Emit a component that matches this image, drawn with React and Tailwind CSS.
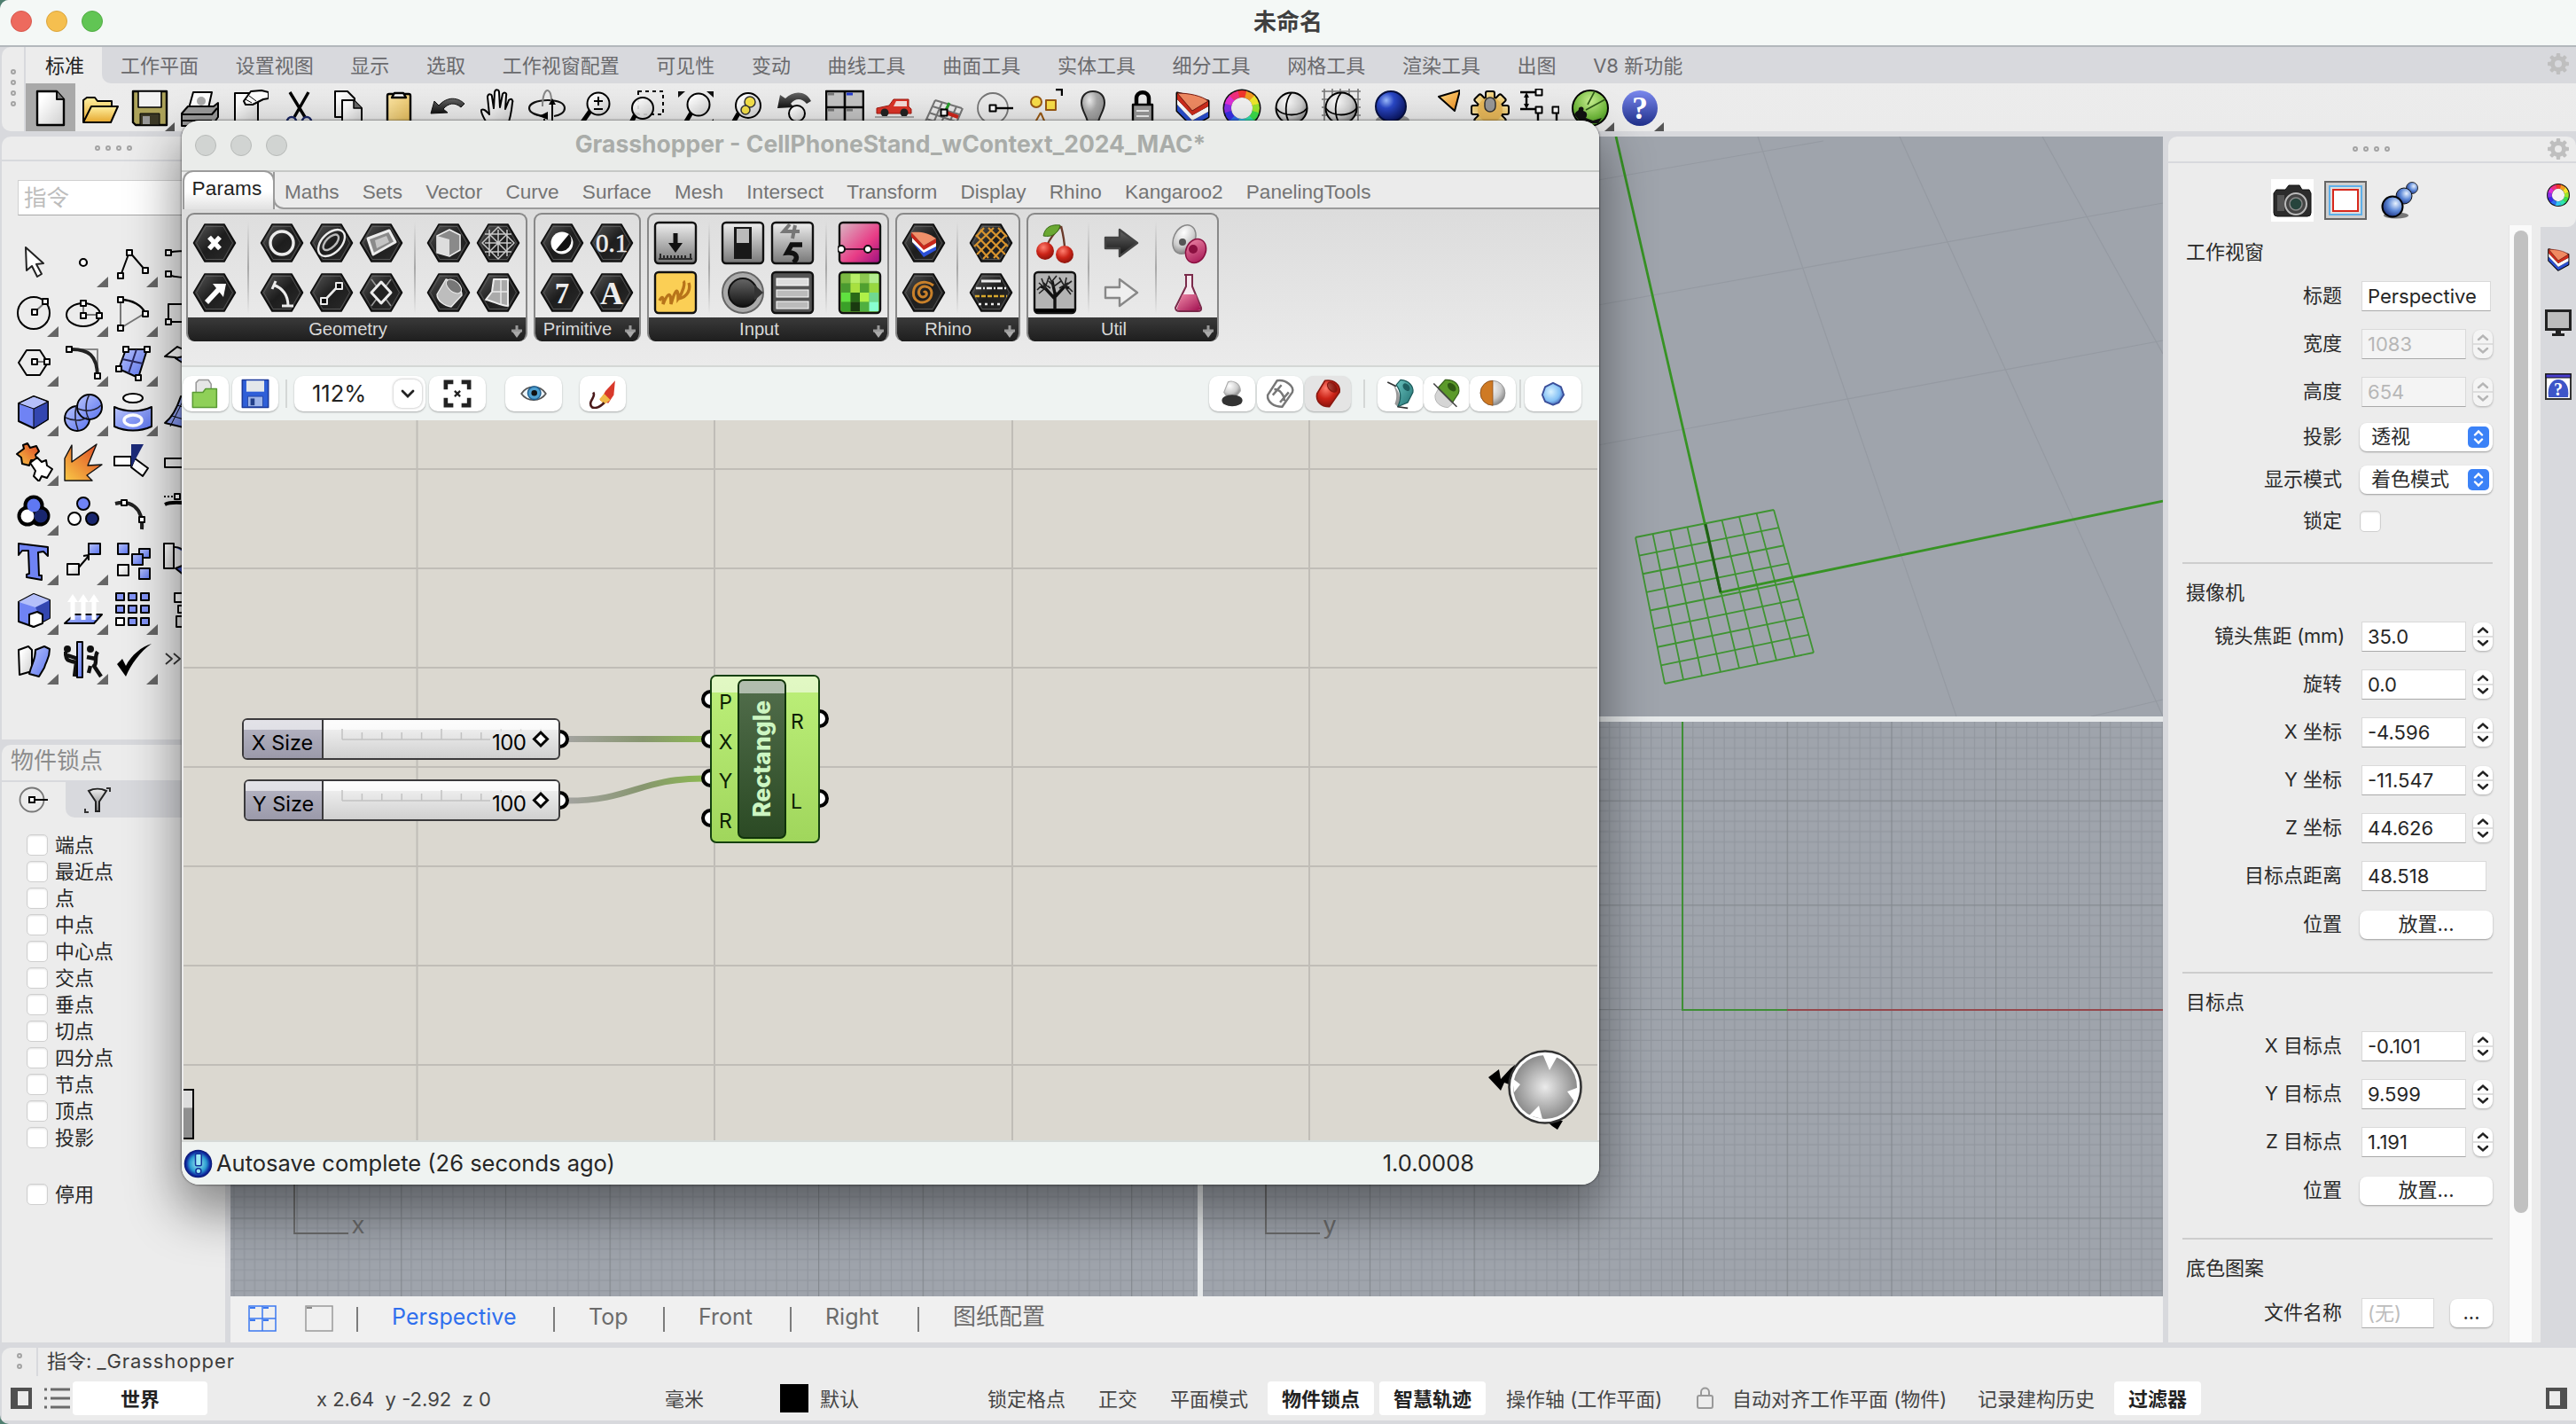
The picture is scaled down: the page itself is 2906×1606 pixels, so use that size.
import React from "react";

const UI = "font-['Inter','Noto_Sans_CJK_SC',sans-serif]";

/* ---------- shared gradients ---------- */
const Defs = () => (
  <svg width="0" height="0" className="absolute">
    <defs>
      <linearGradient id="paper" x1="0" y1="0" x2="1" y2="1"><stop offset=".2" stopColor="#fff" /><stop offset="1" stopColor="#cfcfcf" /></linearGradient>
      <linearGradient id="gold" x1="0" y1="0" x2="0" y2="1"><stop offset="0" stopColor="#fff0a0" /><stop offset="1" stopColor="#e5a62c" /></linearGradient>
      <linearGradient id="tan" x1="0" y1="0" x2="1" y2="1"><stop offset="0" stopColor="#ffe9a8" /><stop offset="1" stopColor="#e3b955" /></linearGradient>
      <linearGradient id="orange" x1="0" y1="1" x2="1" y2="0"><stop offset="0" stopColor="#f9c846" /><stop offset="1" stopColor="#dd4424" /></linearGradient>
      <linearGradient id="cone" x1="0" y1="0" x2="1" y2="1"><stop offset="0" stopColor="#ffe08a" /><stop offset="1" stopColor="#ee8a1c" /></linearGradient>
      <linearGradient id="blue" x1="0" y1="0" x2="1" y2="1"><stop offset="0" stopColor="#b9c4fb" /><stop offset="1" stopColor="#5a74f0" /></linearGradient>
      <linearGradient id="dark" x1="0" y1="0" x2="0" y2="1"><stop offset="0" stopColor="#666" /><stop offset="1" stopColor="#111" /></linearGradient>
      <linearGradient id="steel" x1="0" y1="0" x2="0" y2="1"><stop offset="0" stopColor="#efefef" /><stop offset="1" stopColor="#777" /></linearGradient>
      <linearGradient id="help" x1="0" y1="0" x2="0" y2="1"><stop offset="0" stopColor="#7a88ee" /><stop offset="1" stopColor="#1f2f8a" /></linearGradient>
      <linearGradient id="hex" x1="0" y1="0" x2="1" y2="1"><stop offset="0" stopColor="#5a5a5a" /><stop offset=".5" stopColor="#1d1d1d" /><stop offset="1" stopColor="#2c2c2c" /></linearGradient>
      <linearGradient id="pink" x1="0" y1="0" x2="1" y2="1"><stop offset="0" stopColor="#d9b8c4" /><stop offset=".6" stopColor="#e83c86" /><stop offset="1" stopColor="#9a0f80" /></linearGradient>
      <linearGradient id="flask" x1="0" y1="0" x2="1" y2="1"><stop offset="0" stopColor="#f08aa8" /><stop offset="1" stopColor="#a01050" /></linearGradient>
      <radialGradient id="ball" cx=".35" cy=".3" r=".8"><stop offset="0" stopColor="#fff" /><stop offset=".6" stopColor="#cdcdcd" /><stop offset="1" stopColor="#777" /></radialGradient>
      <radialGradient id="bulb" cx=".35" cy=".25" r=".8"><stop offset="0" stopColor="#eee" /><stop offset=".4" stopColor="#aaa" /><stop offset="1" stopColor="#8a8a8a" /></radialGradient>
      <radialGradient id="navy" cx=".35" cy=".3" r=".75"><stop offset="0" stopColor="#9dbdff" /><stop offset=".35" stopColor="#2a48c8" /><stop offset="1" stopColor="#08125a" /></radialGradient>
      <radialGradient id="pearl" cx=".65" cy=".35" r=".8"><stop offset="0" stopColor="#e8f2ff" /><stop offset=".45" stopColor="#5f8ad8" /><stop offset="1" stopColor="#0a1a68" /></radialGradient>
      <radialGradient id="sky" cx=".4" cy=".4" r=".7"><stop offset="0" stopColor="#d8f2ff" /><stop offset=".6" stopColor="#83c0f5" /><stop offset="1" stopColor="#2b3f9a" /></radialGradient>
      <radialGradient id="redB" cx=".4" cy=".3" r=".8"><stop offset="0" stopColor="#ff8070" /><stop offset=".5" stopColor="#cc2418" /><stop offset="1" stopColor="#7a0e08" /></radialGradient>
      <radialGradient id="green" cx=".5" cy=".3" r=".8"><stop offset="0" stopColor="#c8f090" /><stop offset=".6" stopColor="#6fb83a" /><stop offset="1" stopColor="#2a6a1a" /></radialGradient>
      <linearGradient id="teal" x1="0" y1="0" x2="1" y2="1"><stop offset="0" stopColor="#6cc4c0" /><stop offset="1" stopColor="#1f6f70" /></linearGradient>
      <radialGradient id="info" cx=".5" cy=".5" r=".5"><stop offset="0" stopColor="#a4f2f6" /><stop offset=".6" stopColor="#2a9ad0" /><stop offset=".85" stopColor="#0f2aa0" /><stop offset="1" stopColor="#0a1670" /></radialGradient>
      <radialGradient id="dial" cx=".5" cy=".5" r=".5"><stop offset="0" stopColor="#ebebeb" /><stop offset="1" stopColor="#8c8c8c" /></radialGradient>
    </defs>
  </svg>
);

const Svg = ({ s = 44, children }) => (
  <svg width={s} height={s} viewBox="0 0 44 44" fill="none" strokeLinejoin="round" className="block shrink-0">{children}</svg>
);
const B = ({ x, y, s = 6, f = "#fff" }) => <rect x={x - s / 2} y={y - s / 2} width={s} height={s} fill={f} stroke="#000" strokeWidth="2" />;

const Wheel = ({ s = 44, r = 16, w = 8 }) => {
  const cols = ["#f0362c", "#f39a20", "#f0e92c", "#9be82e", "#3ce04c", "#30e3b0", "#34c6f0", "#2f6ef2", "#3a2fe8", "#8a2fe8", "#e02fd8", "#f02f7c"];
  return (
    <Svg s={s}>
      <circle cx="22" cy="22" r={r + w / 2 + 1.5} fill="#111" />
      {cols.map((c, i) => {
        const a = ((i * 30 - 105) * Math.PI) / 180, b = ((i * 30 - 73) * Math.PI) / 180;
        return <path key={i} d={`M${22 + r * Math.cos(a)} ${22 + r * Math.sin(a)}A${r} ${r} 0 0 1 ${22 + r * Math.cos(b)} ${22 + r * Math.sin(b)}`} stroke={c} strokeWidth={w} />;
      })}
      <circle cx="22" cy="22" r={r - w / 2} fill="#f3f3f3" />
    </Svg>
  );
};
const Layers = ({ s = 44 }) => (
  <Svg s={s}>
    <path d="M5 5L5 25L22 42L40 32V14Z" fill="#000" stroke="#000" strokeWidth="3" />
    <path d="M5 18V25L22 42L40 32V26L22 36Z" fill="#2b4fd0" />
    <path d="M5 12V18L22 36L40 26V20L22 30Z" fill="#fff" />
    <path d="M5 5V12L22 30L40 20V14L22 25Z" fill="#cf2c1c" />
    <path d="M5 5C18 5 33 8 40 14L22 25Z" fill="#f08a62" stroke="#7a1a10" strokeWidth="1" />
  </Svg>
);
const Gear = () => (
  <svg width="26" height="26" viewBox="0 0 26 26" className="block">
    {[0, 45, 90, 135, 180, 225, 270, 315].map((a) => <rect key={a} x="10.8" y="1" width="4.4" height="6" rx="1" fill="#bfbfbf" transform={`rotate(${a} 13 13)`} />)}
    <circle cx="13" cy="13" r="6.5" fill="none" stroke="#bfbfbf" strokeWidth="5" />
  </svg>
);
const lens = (
  <>
    <path d="M15 25L3 42" stroke="#000" strokeWidth="5" />
    <circle cx="24" cy="17" r="12.5" fill="url(#paper)" stroke="#000" strokeWidth="2" />
  </>
);
const ballIcon = (f) => (
  <>
    <circle cx="22" cy="22" r="17.5" fill={f} stroke="#000" strokeWidth="2" />
    <path d="M22 4.5C14 14 14 30 20 39.5M4.5 22C12 32 32 32 39.5 22" stroke="#000" strokeWidth="1.8" />
  </>
);

/* ---------- main toolbar ---------- */
const TOP = [
  <Svg><path d="M7 3H29L37 12V41H7Z" fill="url(#paper)" stroke="#000" strokeWidth="2.4" /><path d="M29 3V12H37" fill="#777" stroke="#000" strokeWidth="2" /></Svg>,
  <Svg><path d="M3 38V13L7 10H16L19 14H35V20" fill="url(#gold)" stroke="#000" strokeWidth="2" /><path d="M3 38L12 20H42L34 38Z" fill="url(#gold)" stroke="#000" strokeWidth="2" /></Svg>,
  <Svg><path d="M3 3H41V41H6L3 38Z" fill="#ada35a" stroke="#000" strokeWidth="2.4" /><rect x="9" y="3" width="26" height="18" fill="#f2f2f2" stroke="#000" strokeWidth="1.6" /><rect x="11" y="28" width="22" height="13" fill="#3b3826" stroke="#000" /><rect x="14" y="31" width="8" height="9" fill="#999" /></Svg>,
  <Svg><path d="M10 22L15 4H36L32 22Z" fill="#fff" stroke="#000" strokeWidth="2" /><circle cx="24" cy="14" r="5" fill="#aaa" /><path d="M2 28L9 20H38L43 16V32L36 42H2Z" fill="#9a9a9a" stroke="#000" strokeWidth="2" /><path d="M2 29H36L42 22M2 36H36" stroke="#000" strokeWidth="2" /></Svg>,
  <Svg><path d="M6 5H32V41H6Z" fill="url(#paper)" stroke="#000" strokeWidth="2" /><path d="M16 14L24 3L36 2L44 4V11L38 12L26 18L18 18Z" fill="#fff" stroke="#000" strokeWidth="2" /><path d="M18 12L25 16M22 8L30 14" stroke="#000" /></Svg>,
  <Svg><path d="M12 4L29 32M33 4L17 32" stroke="#000" strokeWidth="3.4" /><circle cx="14" cy="37" r="5" stroke="#1b2766" strokeWidth="2.4" /><circle cx="31" cy="37" r="5" stroke="#1b2766" strokeWidth="2.4" /></Svg>,
  <Svg><path d="M7 3H21L29 11V32H7Z" fill="url(#paper)" stroke="#000" strokeWidth="2" /><path d="M15 13H28L37 22V43H15Z" fill="url(#paper)" stroke="#000" strokeWidth="2" /><path d="M28 13V22H37" fill="#666" stroke="#000" strokeWidth="1.5" /></Svg>,
  <Svg><rect x="10" y="6" width="26" height="36" rx="2" fill="url(#tan)" stroke="#000" strokeWidth="2.4" /><path d="M15 10L18 5H28L31 10Z" fill="#fff" stroke="#000" strokeWidth="2.4" /></Svg>,
  <Svg><path d="M3 28L7 14L12 19C22 8 34 10 41 17L37 21C30 15 23 16 17 23L22 27Z" fill="url(#dark)" stroke="#111" /></Svg>,
  <Svg><path d="M12 43C8 34 3 28 4 24C7 22 10 26 13 29L11 9C12 5 16 6 16 9L18 22L19 4C20 0 24 1 24 4L25 21L28 6C30 3 33 5 32 8L31 23L35 13C38 10 40 13 39 16C38 26 36 36 33 43" fill="url(#paper)" stroke="#000" strokeWidth="2" /></Svg>,
  <Svg><path d="M23 31C10 31 2 27 2 22S10 13 23 13S42 17 42 22C42 27 36 30 30 31" stroke="#111" strokeWidth="2.2" /><path d="M17 20C17 8 20 1 23 2C26 3 27 8 27 14" stroke="#888" strokeWidth="2" /><path d="M28 40V14M19 43V34" stroke="#000" strokeWidth="2" /><path d="M24 18L28 11L32 18ZM23 26L13 31L23 35Z" fill="#000" /></Svg>,
  <Svg>{lens}<path d="M19 14H29M24 9V19M19 23H29" stroke="#000" strokeWidth="2" /></Svg>,
  <Svg><path d="M11 27L3 42" stroke="#000" strokeWidth="5" /><rect x="13" y="3" width="28" height="26" stroke="#000" strokeWidth="2" strokeDasharray="4 4" /><circle cx="18" cy="22" r="12" fill="url(#paper)" fillOpacity=".9" stroke="#000" strokeWidth="2" /></Svg>,
  <Svg><path d="M2 10V3H10ZM34 3H42V10ZM42 34V42H34Z" fill="#111" /><path d="M17 27L8 42" stroke="#000" strokeWidth="5" /><circle cx="25" cy="18" r="12.5" fill="url(#paper)" stroke="#000" strokeWidth="2" /></Svg>,
  <Svg><path d="M14 28L6 42" stroke="#000" strokeWidth="5" /><circle cx="25" cy="19" r="14" fill="url(#paper)" stroke="#000" strokeWidth="2" /><circle cx="27" cy="15" r="6" fill="#f6e24a" stroke="#333" strokeWidth="1.5" /><circle cx="22" cy="24" r="5" fill="#f6e24a" stroke="#333" strokeWidth="1.5" /></Svg>,
  <Svg><path d="M2 22L5 7L11 11C20 2 34 2 40 14L35 17C29 10 22 11 17 17L21 21Z" fill="url(#dark)" /><circle cx="24" cy="28" r="9" fill="url(#paper)" stroke="#000" strokeWidth="2" /></Svg>,
  <Svg><rect x="1" y="3" width="42" height="40" fill="#c4c4c4" stroke="#000" strokeWidth="2.6" /><path d="M22 3V43M1 21H43" stroke="#000" strokeWidth="2.6" /><path d="M3 6H10M3 24H10M24 24H31" stroke="#777" strokeWidth="3" /><path d="M24 6H31" stroke="#223ad0" strokeWidth="3" /></Svg>,
  <Svg><path d="M2 22L16 19L21 12H38V20L41 23V28H2Z" fill="#dd3428" stroke="#a01a10" /><path d="M24 14H36V20H21Z" fill="#f7dcd8" /><circle cx="11" cy="27" r="4.5" fill="#222" /><circle cx="33" cy="27" r="4.5" fill="#222" /><path d="M0 32H44" stroke="#aaa" strokeWidth="2" /></Svg>,
  <Svg><path d="M12 13L42 22M9 20L39 29M5 27L35 37M2 34L30 43M12 13L1 37M20 15L9 41M28 17L17 43M36 20L26 43M43 22L34 43" stroke="#777" strokeWidth="2" /><path d="M28 16L22 28" stroke="#26a02a" strokeWidth="3" /><path d="M24 27L38 32" stroke="#d0261c" strokeWidth="4" /><B x={22} y={27} s={7} /></Svg>,
  <Svg><circle cx="21" cy="22" r="17" stroke="#777" strokeWidth="1.8" /><path d="M22 22H44" stroke="#000" strokeWidth="2.4" /><B x={21} y={22} s={7} /></Svg>,
  <Svg><circle cx="14" cy="15" r="6" fill="#fbe04a" stroke="#9a5a14" strokeWidth="2" /><rect x="25" y="13" width="11" height="11" fill="#fbe04a" stroke="#9a5a14" strokeWidth="2" /><path d="M19 27L10 43M19 27L26 43" stroke="#9a5a14" strokeWidth="2" /><path d="M36 1H43V8" stroke="#000" strokeWidth="2.4" /></Svg>,
  <Svg><path d="M17 44C17 32 9 26 9 16C9 8 14 3 22 3S35 8 35 16C35 26 27 32 27 44Z" fill="url(#bulb)" stroke="#222" strokeWidth="2" /></Svg>,
  <Svg><path d="M15 20V11C15 2 29 2 29 11V20" stroke="#000" strokeWidth="4.5" /><rect x="11" y="18" width="22" height="26" fill="#9a9a9a" stroke="#000" strokeWidth="2.4" /><path d="M15 25H29M15 31H29M15 37H29" stroke="#eee" strokeWidth="2" /></Svg>,
  <Layers />,
  <Wheel />,
  <Svg>{ballIcon("url(#ball)")}</Svg>,
  <Svg><path d="M0 3H44M0 12H44M0 21H44M0 30H44M0 38H44M3 0V44M12 0V44M21 0V44M31 0V44M41 0V44" stroke="#777" strokeWidth="1.6" />{ballIcon("url(#ball)")}</Svg>,
  <Svg><ellipse cx="24" cy="36" rx="19" ry="7" fill="#999" /><circle cx="22" cy="20" r="17" fill="url(#navy)" stroke="#061040" strokeWidth="2" /></Svg>,
  <Svg><path d="M20 9L44 2L38 25Z" fill="url(#cone)" stroke="#000" strokeWidth="2" /></Svg>,
  <Svg>{[0, 45, 90, 135, 180, 225, 270, 315].map((a) => <rect key={a} x="17" y="3" width="10" height="11" rx="2" fill="url(#tan)" stroke="#000" strokeWidth="2" transform={`rotate(${a} 22 24)`} />)}<circle cx="22" cy="24" r="14" fill="#e9b95a" /><rect x="16" y="10" width="12" height="16" rx="6" fill="#999" stroke="#333" strokeWidth="1.5" /></Svg>,
  <Svg><path d="M0 4H24M0 23H18M7 8V19" stroke="#000" strokeWidth="2.4" /><path d="M4 10L7 4L10 10ZM4 17L7 23L10 17Z" fill="#000" /><B x={21} y={4} s={7} /><B x={21} y={24} s={7} /><B x={40} y={24} s={7} /><path d="M20 28V44M41 28V44" stroke="#000" strokeWidth="2.4" /></Svg>,
  <Svg><circle cx="23" cy="22" r="20" fill="url(#green)" stroke="#000" strokeWidth="2" /><path d="M5 29C8 24 10 26 10 22C13 19 17 21 15 25C20 26 20 30 18 33L26 36L36 33L32 39L22 39L12 38Z" fill="#111" /><path d="M18 24L40 12M28 3L20 18" stroke="#2f5a18" strokeWidth="1.6" /></Svg>,
  <Svg><circle cx="23" cy="22" r="20" fill="url(#help)" /><text x="23" y="34" textAnchor="middle" fontFamily="Liberation Serif" fontWeight="700" fontSize="36" fill="#fff">?</text></Svg>,
];

/* ---------- side tool palette ---------- */
const bb = { fill: "url(#blue)", stroke: "#000", strokeWidth: 2 };
const TOOLS = [
  [0, <Svg><path d="M13 4L14 30L20 25L26 37L31 34L25 23L33 22Z" fill="#fff" stroke="#222" strokeWidth="2" /></Svg>],
  [1, <Svg><circle cx="22" cy="21" r="4" fill="#fff" stroke="#000" strokeWidth="2.2" /></Svg>],
  [1, <Svg><path d="M8 36L18 9L36 30" stroke="#000" strokeWidth="2" /><B x={8} y={36} /><B x={18} y={10} /><B x={36} y={30} /></Svg>],
  [0, <Svg><path d="M6 10C14 8 20 8 44 8M6 35C14 38 20 38 44 38" stroke="#000" strokeWidth="2" /><B x={6} y={10} /><B x={6} y={34} /></Svg>],
  [1, <Svg><circle cx="22" cy="22" r="18" stroke="#000" strokeWidth="2" /><path d="M23 21L35 10" stroke="#777" strokeWidth="2" /><B x={23} y={21} /><B x={35} y={9} /></Svg>],
  [1, <Svg><ellipse cx="22" cy="24" rx="19" ry="13" stroke="#000" strokeWidth="2" /><path d="M22 24V12M22 24H40" stroke="#777" strokeWidth="2" /><B x={22} y={25} /><B x={22} y={11} /><B x={40} y={25} /></Svg>],
  [1, <Svg><path d="M8 7V39L36 22" stroke="#777" strokeWidth="2" /><path d="M8 7C22 7 32 14 36 22" stroke="#000" strokeWidth="2.4" /><B x={8} y={7} /><B x={8} y={39} /><B x={36} y={23} /></Svg>],
  [0, <Svg><rect x="6" y="12" width="40" height="20" stroke="#000" strokeWidth="2" /><B x={6} y={32} /></Svg>],
  [1, <Svg><path d="M5 22L14 8H29L38 22L29 36H14Z" stroke="#000" strokeWidth="2" /><path d="M22 21H36" stroke="#777" strokeWidth="2" /><B x={23} y={21} /><B x={37} y={21} /></Svg>],
  [1, <Svg><path d="M38 38V7H6" stroke="#888" strokeWidth="2" /><path d="M6 7C28 6 38 14 38 38" stroke="#222" strokeWidth="4" /><B x={6} y={7} /><B x={38} y={37} /></Svg>],
  [1, <Svg><path d="M14 7L38 7L28 39L6 29Z" {...bb} /><path d="M10 18L33 23M26 7L17 34" stroke="#2a2a60" strokeWidth="2" /><B x={14} y={7} /><B x={38} y={7} /><B x={28} y={39} /><B x={6} y={29} /></Svg>],
  [0, <Svg><path d="M2 15L16 4C22 8 30 8 44 6L34 22C26 22 20 20 14 16Z" fill="#fff" stroke="#000" strokeWidth="2" /><path d="M14 17L44 10V28C32 28 24 24 14 17Z" {...bb} /></Svg>],
  [1, <Svg><path d="M5 12L22 4L38 10V30L22 40L5 32Z" fill="#6f83f4" stroke="#000" strokeWidth="2" /><path d="M22 18L38 10V30L22 40Z" fill="#3346b0" stroke="#000" /><path d="M5 12L22 4L38 10L22 18Z" fill="#b4bffa" stroke="#000" /></Svg>],
  [1, <Svg><circle cx="15" cy="29" r="14" fill="url(#blue)" stroke="#000" strokeWidth="2" /><circle cx="29" cy="16" r="14" fill="url(#blue)" stroke="#000" strokeWidth="2" /><path d="M2 28C10 32 20 32 26 28M14 15C12 24 13 34 16 42M16 18C26 22 36 20 42 14M29 2C24 10 24 22 28 29" stroke="#223" strokeWidth="1.6" /></Svg>],
  [1, <Svg><ellipse cx="22" cy="6" rx="11" ry="5" fill="#fff" stroke="#000" strokeWidth="2" /><path d="M1 16C14 22 30 22 43 16V38C30 44 14 44 1 38Z" {...bb} /><ellipse cx="22" cy="31" rx="10" ry="6" stroke="#fff" strokeWidth="3.4" /></Svg>],
  [0, <Svg><path d="M2 34C10 28 16 16 20 4L44 10V44Z" {...bb} /><path d="M10 26L30 32M16 14L34 20M8 38L22 10" stroke="#000" /></Svg>],
  [1, <Svg><path d="M3 13L11 7L10 3L15 1L18 6L25 4L28 10L24 14L26 20L19 20L17 26L9 24L8 17Z" fill="url(#orange)" stroke="#000" strokeWidth="2" /><path d="M18 23L26 17L31 22L36 20L37 26L43 30L37 40L31 38L28 44L22 38L24 32Z" fill="#fff" stroke="#000" strokeWidth="2" /></Svg>],
  [0, <Svg><path d="M1 18L9 3V22L37 2L27 26L43 25L26 37L32 43H1Z" fill="url(#orange)" stroke="#111" strokeWidth="1.4" /></Svg>],
  [0, <Svg><path d="M1 16H20V26H1ZM24 18L39 29L33 38L20 28Z" fill="#fff" stroke="#000" strokeWidth="2" /><path d="M20 2H34L20 28Z" fill="#1b2a78" /></Svg>],
  [0, <Svg><rect x="2" y="18" width="42" height="10" fill="#eee" stroke="#000" strokeWidth="2" /></Svg>],
  [1, <Svg><g fill="#000"><circle cx="22" cy="15" r="11.5" /><circle cx="15" cy="27" r="11.5" /><circle cx="29" cy="27" r="11.5" /></g><circle cx="15" cy="27" r="7.5" fill="#fff" /><circle cx="30" cy="27" r="7.500" fill="#18266e" /><circle cx="22" cy="15" r="7.5" fill="#5f78f2" /></Svg>],
  [0, <Svg><circle cx="22" cy="13" r="7" fill="#6f83f4" stroke="#000" strokeWidth="2" /><circle cx="12" cy="30" r="7" fill="#fff" stroke="#000" strokeWidth="2" /><circle cx="32" cy="30" r="7" fill="#18266e" stroke="#000" strokeWidth="2" /></Svg>],
  [0, <Svg><path d="M2 13C18 9 34 16 32 42" stroke="#222" strokeWidth="4" /><B x={12} y={12} /><B x={32} y={31} /></Svg>],
  [0, <Svg><path d="M1 5H12" stroke="#000" strokeWidth="2" strokeDasharray="2 2" /><B x={16} y={5} /><path d="M2 14C10 10 30 12 44 16" stroke="#000" strokeWidth="4" /></Svg>],
  [1, <Svg><path d="M5 2L38 6V16L33 11L27 12L28 38H31V43L14 40V37L17 36L16 10L9 10L5 15Z" fill="#6f83f4" stroke="#000" strokeWidth="2" /></Svg>],
  [1, <Svg><path d="M16 30L28 16M28 21V15L22 16" stroke="#000" strokeWidth="2" /><rect x="28" y="2" width="13" height="12" {...bb} /><rect x="4" y="25" width="13" height="12" fill="url(#paper)" stroke="#000" strokeWidth="2" /></Svg>],
  [0, <Svg><rect x="5" y="2" width="12" height="12" {...bb} /><rect x="5" y="26" width="12" height="12" fill="url(#paper)" stroke="#000" strokeWidth="2" /><rect x="29" y="8" width="12" height="10" {...bb} /><rect x="21" y="14" width="12" height="12" {...bb} /><rect x="29" y="30" width="12" height="12" {...bb} /></Svg>],
  [0, <Svg><rect x="1" y="2" width="11" height="28" fill="url(#paper)" stroke="#000" strokeWidth="2" /><path d="M13 6C18 6 22 8 24 12M14 30L24 26V38Z" stroke="#000" strokeWidth="2" fill="#4a5fd0" /></Svg>],
  [1, <Svg><path d="M5 12L22 3L40 10V30L22 40L5 34Z" fill="#6f83f4" stroke="#000" strokeWidth="2" /><path d="M5 12L22 3L40 10L24 18Z" fill="#b4bffa" /><path d="M24 18L40 10V30L32 34Z" fill="#3346b0" /><path d="M17 26L26 23L32 26V36L22 40L17 38Z" fill="#fff" stroke="#000" strokeWidth="2" /></Svg>],
  [1, <Svg><path d="M1 36L12 26H43L34 36Z" {...bb} /><path d="M10 32V10M22 32V10M34 32V10" stroke="#fff" strokeWidth="5" /><path d="M4 12L10 3L16 12ZM16 12L22 3L28 12ZM28 12L34 3L40 12Z" fill="#fff" /></Svg>],
  [1, <Svg>{[0, 1, 2].map((r) => [0, 1, 2].map((c) => <rect key={c + r * 3} x={3 + c * 14} y={2 + r * 14} width="9" height="8" fill={r === 2 && c === 0 ? "#fff" : "#8293f6"} stroke="#000" strokeWidth="2" />))}</Svg>],
  [0, <Svg><rect x="13" y="2" width="14" height="10" fill="#fff" stroke="#000" strokeWidth="2" /><rect x="17" y="16" width="14" height="8" fill="#fff" stroke="#000" strokeWidth="2" /><rect x="15" y="28" width="14" height="12" fill="#ddd" stroke="#000" strokeWidth="2" /></Svg>],
  [1, <Svg><path d="M5 10L16 6L20 10V34L6 38Z" fill="url(#paper)" stroke="#000" strokeWidth="2" /><path d="M24 10L34 6L40 9C40 20 36 22 34 30L28 40L17 37C20 24 24 22 24 10Z" {...bb} /></Svg>],
  [1, <Svg><g stroke="#111" strokeWidth="4.4"><path d="M2 12C2 22 4 22 14 24L12 40M4 16L16 20M38 12C34 18 38 26 34 28L42 40M36 20L26 18M30 28L28 36" /></g><circle cx="4" cy="9" r="4" fill="#111" /><circle cx="30" cy="9" r="4" fill="#111" /><rect x="15" y="1" width="6" height="40" {...bb} /></Svg>],
  [1, <Svg><path d="M4 26L10 20L14 28C20 16 32 6 43 3C30 12 20 26 14 40Z" fill="#000" /></Svg>],
  [0, <Svg><path d="M3 14L10 20L3 26M12 14L19 20L12 26" stroke="#333" strokeWidth="1.8" /></Svg>],
];

/* ---------- ribbon icons ---------- */
const Hex = ({ children }) => (
  <svg width="50" height="46" viewBox="0 0 50 46" fill="none" className="block" strokeLinejoin="round">
    <path d="M14 2H36L48.5 23L36 44H14L1.5 23Z" fill="url(#hex)" stroke="#0c0c0c" strokeWidth="1.5" />
    <path d="M15 4.5H35L45.5 23L35 41.5H15L4.5 23Z" stroke="#666" strokeWidth="1" opacity=".7" />
    {children}
  </svg>
);
const Tile = ({ bg = "url(#steel)", children }) => (
  <svg width="50" height="50" viewBox="0 0 50 50" fill="none" className="block">
    <rect x="2" y="2" width="46" height="46" rx="4" fill={bg} stroke="#111" strokeWidth="2.4" />
    {children}
  </svg>
);
const Plain = ({ children }) => <svg width="50" height="50" viewBox="0 0 50 50" fill="none" className="block" strokeLinejoin="round">{children}</svg>;
const W = "#ececec";
const mosaic = ["#7bb842", "#b8ee68", "#8cc850", "#b4ee90", "#4a9a30", "#a8e040", "#50a030", "#98d840", "#60e040", "#2a6a18", "#b0f048", "#70d890", "#3aa028", "#1a3a10", "#50b040", "#88ffd0"];

const RIBBON = [
  ["Geometry", "w-[385px]", [
    [[<Hex><path d="M19 16.500L31 29.500M31 16.500L19 29.500" stroke="#fff" strokeWidth="5.4" /></Hex>, <Hex><path d="M16 34L30 19" stroke="#fff" strokeWidth="5.600" /><path d="M23 13H38L35 28Z" fill="#fff" /></Hex>]],
    [[<Hex><circle cx="25" cy="23" r="13" stroke={W} strokeWidth="3.4" /></Hex>, <Hex><path d="M15 14C26 18 32 26 32 38M25 38H38M14 19L18 10" stroke={W} strokeWidth="3" /></Hex>],
      [<Hex><g transform="rotate(-45 25 23)"><ellipse cx="25" cy="23" rx="18" ry="11" stroke={W} strokeWidth="2.4" /><ellipse cx="25" cy="22" rx="11" ry="5.5" stroke="#bbb" strokeWidth="2.4" /></g></Hex>, <Hex><path d="M17 32L33 15" stroke={W} strokeWidth="2.6" /><rect x="13" y="29" width="7" height="7" fill="#111" stroke={W} strokeWidth="2" /><rect x="30" y="12" width="7" height="7" fill="#111" stroke={W} strokeWidth="2" /></Hex>],
      [<Hex><path d="M10 18L34 9L41 22L16 36Z" fill="#8a8a8a" stroke={W} strokeWidth="3" /><path d="M18 20L31 15L34 22L20 29Z" fill="#c4c4c4" /></Hex>, <Hex><path d="M14 8L36 38M36 8L14 38" stroke="#999" strokeWidth="1.6" /><path d="M25 11L36 23L25 35L14 23Z" stroke={W} strokeWidth="3" fill="#222" /></Hex>]],
    [[<Hex><path d="M12 15L26 8L38 14V31L26 38L12 34Z" fill="#8a8a8a" stroke={W} strokeWidth="1.6" /><path d="M12 15L26 19V38L12 34Z" fill="#ddd" /></Hex>, <Hex><path d="M12 25L22 8C32 10 40 18 40 26L28 39C20 38 12 32 12 25Z" fill="#bdbdbd" stroke={W} strokeWidth="1.4" /><ellipse cx="31" cy="16" rx="10" ry="6" transform="rotate(40 31 16)" fill="#777" stroke={W} /></Hex>],
      [<Hex><path d="M15 8V38M25 8V38M35 8V38M10 13H40M10 23H40M10 33H40M15 13L35 33M35 13L15 33M25 5L43 23L25 41L7 23Z" stroke="#c9c9c9" strokeWidth="1.5" /></Hex>, <Hex><path d="M20 8H36V38C28 38 18 32 11 31L18 22Z" fill="#aaa" stroke={W} strokeWidth="2" /><path d="M28 8V36M18 22H36" stroke={W} strokeWidth="1.4" /></Hex>]],
  ]],
  ["Primitive", "w-[121px]", [
    [[<Hex><circle cx="25" cy="23" r="12.5" fill="#fff" /><path d="M33 13A12 12 0 0 1 18 31Z" fill="#111" /></Hex>, <Hex><text x="25" y="35" textAnchor="middle" fontFamily="Liberation Serif" fontWeight="700" fontSize="33" fill={W}>7</text></Hex>],
      [<Hex><text x="25" y="33" textAnchor="middle" fontFamily="Liberation Serif" fontSize="29" fill={W} stroke={W} strokeWidth=".6">0.1</text></Hex>, <Hex><text x="25" y="36" textAnchor="middle" fontFamily="Liberation Serif" fontWeight="700" fontSize="36" fill={W}>A</text></Hex>]],
  ]],
  ["Input", "w-[273px]", [
    [[<Tile><path d="M25 14V30" stroke="#111" strokeWidth="5" /><path d="M17 25H33L25 36Z" fill="#111" /><path d="M8 42V37M12 42V39M16 42V39M20 42V39M24 42V39M28 42V39M32 42V39M36 42V39M42 42V37M6 43H44" stroke="#111" strokeWidth="1.6" /></Tile>,
      <Tile bg="#fbcf55"><path d="M7 34C10 28 12 30 11 38C16 26 20 22 20 38C24 24 28 16 28 32C34 24 36 14 34 12M28 32C40 30 42 20 40 14" stroke="#b8741a" strokeWidth="3.4" /></Tile>]],
    [[<Tile><rect x="15" y="7" width="20" height="36" fill="#181818" /><rect x="18" y="9" width="14" height="16" fill="#bbb" /></Tile>,
      <Plain><circle cx="25" cy="25" r="23" fill="#aaa" stroke="#666" strokeWidth="2" /><circle cx="25" cy="25" r="16" fill="url(#dark)" stroke="#111" strokeWidth="2" /><path d="M38 16L48 25L38 34Z" fill="#333" /></Plain>],
      [<Tile><path d="M22 4L15 12H33M28 5L25 20" stroke="#777" strokeWidth="4" /><path d="M36 27H24L19 36C30 35 32 42 26 47" stroke="#111" strokeWidth="5.500" /></Tile>,
        <Tile bg="#555"><rect x="7" y="9" width="36" height="8" fill="#ddd" stroke="#fff" /><rect x="7" y="22" width="36" height="8" fill="#bbb" stroke="#fff" /><rect x="7" y="35" width="36" height="8" fill="#bbb" stroke="#fff" /></Tile>]],
    [[<Tile bg="url(#pink)"><path d="M3 32H47" stroke="#4a1030" strokeWidth="2" /><circle cx="4" cy="32" r="4" fill="#fff" stroke="#111" strokeWidth="2" /><circle cx="34" cy="32" r="4" fill="#fff" stroke="#111" strokeWidth="2" /></Tile>,
      <Tile bg="#6ab030">{mosaic.map((c, i) => <rect key={i} x={4 + (i % 4) * 10.5} y={4 + Math.floor(i / 4) * 10.5} width="10.6" height="10.6" fill={c} />)}</Tile>]],
  ]],
  ["Rhino", "w-[141px]", [
    [[<Hex><path d="M12 22L25 39L39 31V25L25 33Z" fill="#2b50d8" /><path d="M12 17V22L25 34L39 27V22L25 30Z" fill="#fff" /><path d="M11 11V16L25 31L39 23V18L25 26Z" fill="#c8261a" /><path d="M11 11C20 10 30 11 39 18L25 26Z" fill="#f0906a" /></Hex>,
      <Hex><path d="M25 23C27 20 30 24 27 27C22 30 18 25 20 20C23 14 33 15 34 23C34 32 25 36 19 33C11 29 12 17 19 13C24 10 31 11 36 15" stroke="#c8802a" strokeWidth="3" /></Hex>]],
    [[<Hex><path d="M13 8L41 36M8 14L34 41M22 6L44 27M8 24L22 40M33 6L43 16M37 8L9 36M42 14L16 41M28 6L6 27M43 24L28 40M17 6L8 16" stroke="#d8942e" strokeWidth="2.2" /></Hex>,
      <Hex><path d="M14 10H36" stroke={W} strokeWidth="3" /><path d="M8 18H42" stroke={W} strokeWidth="2.4" strokeDasharray="6 2 2 2" /><path d="M7 27H43" stroke="#d8a82e" strokeWidth="2.6" strokeDasharray="5 2" /><path d="M11 36H39" stroke={W} strokeWidth="2.6" strokeDasharray="3 4" /></Hex>]],
  ]],
  ["Util", "w-[217px]", [
    [[<Plain><path d="M32 6C26 12 20 18 16 28M32 6C34 14 36 22 36 32" stroke="#6a3a2a" strokeWidth="2.4" /><path d="M12 17C14 6 22 4 31 5C29 14 22 19 12 17Z" fill="#6aa832" stroke="#3a6a18" /><circle cx="14" cy="34" r="10" fill="url(#redB)" /><circle cx="36" cy="38" r="10" fill="url(#redB)" /></Plain>,
      <Tile bg="#b4b4b4"><path d="M3 43H47V47H3Z" fill="#000" /><path d="M25 44V24M25 32L14 20M25 30L36 18M25 26L22 12M14 20L9 18M36 18L41 20" stroke="#111" strokeWidth="3.4" /><g stroke="#222" strokeWidth="1.6"><path d="M7 14L14 20L10 9M14 20L18 8M22 14L18 6M22 12L27 6M36 18L30 8M36 18L38 8M36 18L44 12M9 18L5 22M41 20L45 24M14 20L7 26M36 18L43 27M18 12L24 18L32 12M12 14L20 20M30 20L40 14" /></g></Tile>]],
    [[<Plain><path d="M6 19H22V10L42 25L22 40V31H6Z" fill="url(#dark)" stroke="#444" strokeWidth="2.4" /></Plain>,
      <Plain><path d="M6 19H22V10L42 25L22 40V31H6Z" fill="#efefef" stroke="#888" strokeWidth="2.4" /></Plain>]],
    [[<Plain><ellipse cx="19" cy="21" rx="12" ry="17" transform="rotate(25 19 21)" fill="url(#ball)" stroke="#888" strokeWidth="1.5" /><circle cx="17" cy="24" r="4" fill="#555" /><ellipse cx="32" cy="34" rx="11" ry="14" transform="rotate(25 32 34)" fill="url(#flask)" stroke="#8a1040" strokeWidth="1.5" /><circle cx="29" cy="32" r="5" fill="#8a1040" /></Plain>,
      <Plain><path d="M19 5H29M21 6V18L9 42Q9 46 14 46H34Q39 46 38 42L28 18V6" fill="#f5e8ee" stroke="#7a2a4a" strokeWidth="2" /><path d="M17 27H32L37 42Q38 45 34 45H14Q10 45 11 42Z" fill="url(#flask)" /></Plain>]],
  ]],
];

const RibbonPanel = ({ name, w, groups }) => (
  <div className={`${w} h-[145px] rounded-[9px] border-2 border-[#888] border-b-0 flex flex-col overflow-hidden bg-gradient-to-b from-[#dedede] to-[#ececec]`}>
    <div className="flex h-[117px] pl-[2px] items-start">
      {groups.map((g, i) => (
        <React.Fragment key={i}>
          {i > 0 && <div className="w-5 flex justify-center pt-2"><div className="w-[2px] h-[104px] bg-gradient-to-b from-transparent via-[#a8a8a8] to-transparent" /></div>}
          {g.map((col, j) => (
            <div key={j} className="w-14 flex flex-col items-center pt-1">
              {col.map((ic, k) => <div key={k} className="h-14 flex items-center">{ic}</div>)}
            </div>
          ))}
        </React.Fragment>
      ))}
    </div>
    <div className="relative h-7 -mx-[2px] bg-gradient-to-b from-[#3a3a3a] to-[#1d1d1d] flex justify-center items-center text-[#d9d9d9] text-[20.200px] font-['Liberation_Sans',sans-serif]">
      <span className={name === "Geometry" || name === "Input" || name === "Util" ? "pb-[2px] pr-5" : "pb-[2px] pr-[22px]"}>{name}</span>
      <svg width="16" height="18" viewBox="0 0 16 18" className="absolute right-[4px] top-[7px]"><path d="M8 2V12M2 8H14" stroke="#999" strokeWidth="3" /><path d="M3 9H13L8 16Z" fill="#aaa" /></svg>
    </div>
  </div>
);

/* ---------- small controls ---------- */
const Dots = ({ n = 4, vertical }) => (
  <div className={vertical ? "flex flex-col gap-[6px]" : "flex gap-[6px]"}>
    {Array.from({ length: n }, (_, i) => <div key={i} className="size-[6px] rounded-full border-2 border-[#a3a3a3]" />)}
  </div>
);
const Check = () => <div className="size-6 rounded-[5px] bg-white border border-[#cfcfcf] shadow-[inset_0_1px_2px_rgba(0,0,0,.12)] shrink-0" />;
const Btn = ({ w = "w-[52px]", on, children }) => (
  <div className={`${w} h-10 rounded-[10px] flex items-center justify-center shadow-[0_1px_2px_rgba(0,0,0,.3)] shrink-0 ${on ? "bg-[#e4e4e4]" : "bg-white"}`}>{children}</div>
);
const Stepper = ({ off }) => (
  <svg width="24" height="34" viewBox="0 0 24 34" className="block drop-shadow-[0_1px_1px_rgba(0,0,0,.28)]" fill="none">
    <rect x="1" y="1" width="22" height="32" rx="8" fill={off ? "#f4f4f4" : "#fff"} />
    <path d="M1 17H23" stroke="#ddd" strokeWidth="2" />
    <path d="M7 12L12 7.5L17 12M7 22L12 26.5L17 22" stroke={off ? "#b5b5b5" : "#222"} strokeWidth="2.4" strokeLinecap="round" />
  </svg>
);
const Field = ({ w = "w-[118px]", off, children }) => (
  <div className={`${w} h-[34px] ml-[2px] pl-[6px] pt-px flex items-center border border-[#d9d9d9] border-b-[#a9a9a9] ${off ? "bg-[#f4f4f4] text-[#b7b7b7]" : "bg-white text-[#262626]"} text-[22px]`}>{children}</div>
);
const Row = ({ label, h = "h-[54px]", children }) => (
  <div className={`${h} flex items-center`}>
    <div className="w-[196px] flex justify-end text-[22px] whitespace-pre">{label}</div>
    <div className="ml-5 mt-px flex items-center">{children}</div>
  </div>
);
const Num = ({ label, v, off }) => <Row label={label}><Field off={off}>{v}</Field><div className="ml-[7px]"><Stepper off={off} /></div></Row>;
const Popup = ({ children }) => (
  <div className="w-[150px] h-8 rounded-[8px] bg-white shadow-[0_1px_2px_rgba(0,0,0,.35)] pl-[13px] pr-1 flex items-center justify-between text-[22px] whitespace-nowrap">
    <span className="pb-px">{children}</span>
    <svg width="24" height="24" viewBox="0 0 24 24" fill="none" className="shrink-0"><rect width="24" height="24" rx="5" fill="#3b82f7" /><path d="M8 9.5L12 5.5L16 9.5M8 14.5L12 18.5L16 14.5" stroke="#fff" strokeWidth="2.4" strokeLinecap="round" /></svg>
  </div>
);
const Push = ({ w = "w-[150px]", children }) => <div className={`${w} h-8 rounded-[8px] bg-white shadow-[0_1px_2px_rgba(0,0,0,.35)] flex items-center justify-center text-[22px] pb-px`}>{children}</div>;
const Title = ({ children }) => <div className="h-8 flex items-center pl-5 text-[22px]">{children}</div>;
const Rule = ({ first }) => <div className={`${first ? "mt-6" : "mt-[26px]"} ml-4 w-[350px] h-[2px] bg-[#cdcdcd] mb-4 shrink-0`} />;

/* ---------- viewports ---------- */
const OrthoView = ({ id, w, ox, label, lx, axes }) => (
  <svg width={w} height="648" viewBox={`0 0 ${w} 648`} className="block bg-[#9fa4ac]" fill="none">
    <defs>
      <pattern id={id} x={ox} y="324" width="117.7" height="117.7" patternUnits="userSpaceOnUse">
        {[1, 2, 3, 4, 5, 6, 7, 8, 9].map((i) => (
          <path key={i} d={`M${i * 11.77} 0V117.7M0 ${i * 11.77}H117.7`} stroke="#92979f" strokeWidth="1.2" />
        ))}
        <path d="M.5 0V117.7M0 .5H117.7" stroke="#84898f" strokeWidth="1.4" />
      </pattern>
    </defs>
    <rect width={w} height="648" fill={`url(#${id})`} />
    {axes && <><path d="M541 0V325H659" stroke="#3f8f35" strokeWidth="2" /><path d="M659 325H1083" stroke="#96474c" strokeWidth="2" /></>}
    <path d={`M${lx} 500V577H${lx + 61}`} stroke="#6a6a6a" strokeWidth="1.8" />
    <text x={lx + 65} y="577" fontFamily="Liberation Sans" fontSize="28" fill="#6a6a6a">{label}</text>
  </svg>
);
const lerp = (a, b, t) => [a[0] + (b[0] - a[0]) * t, a[1] + (b[1] - a[1]) * t];
const PerspectiveView = () => {
  const q = [[488, 452], [644, 421], [689, 582], [521, 617]];
  const n = 8;
  return (
    <svg width="1083" height="654" viewBox="0 0 1083 654" className="block bg-[#9fa4ac]" fill="none">
      <path d="M626 0L850 654M786 0L1083 654M947 0L1083 245M446 49L700 5M446 190L1083 75M446 348L1083 230M1002 654L1083 635" stroke="#959aa2" strokeWidth="1.2" />
      {Array.from({ length: n + 1 }, (_, i) => {
        const t = i / n;
        const a = lerp(q[0], q[1], t), b = lerp(q[3], q[2], t), c = lerp(q[0], q[3], t), d = lerp(q[1], q[2], t);
        return <path key={i} d={`M${a}L${b}M${c}L${d}`} stroke="#3f9432" strokeWidth="1.8" />;
      })}
      <path d="M466 0L584 514L1083 411" stroke="#379324" strokeWidth="2.8" />
      <path d="M567 437L584 514" stroke="#1f5f16" strokeWidth="3" />
    </svg>
  );
};

/* ---------- Grasshopper canvas ---------- */
const Grip = ({ cls }) => <div className={`absolute size-[21px] rounded-full bg-white border-[4px] border-black ${cls}`} />;
const Slider = ({ cls, name, labelW }) => (
  <div className={`absolute ${cls} h-[47px]`}>
    <Grip cls="-right-[10px] top-[13px]" />
    <div className="absolute inset-0 rounded-[6px] border-[2.4px] border-[#3b3a3c] overflow-hidden flex bg-gradient-to-b from-[#f7f7f7] to-[#d0d0d0]">
      <div className={`${labelW} h-full border-r-2 border-[#3b3a3c] bg-gradient-to-b from-[#b9b8c6] to-[#9b9aaa] relative`}>
        <div className="absolute inset-x-0 top-0 h-[11px] bg-white/60" />
        <div className="absolute left-0 right-0 top-[10px] text-center text-[23.400px] leading-[32px] text-black">{name}</div>
      </div>
      <div className="grow relative">
        <div className="absolute inset-x-0 top-0 h-[11px] bg-white/70" />
        <svg width="266" height="42" viewBox="0 0 266 42" className="absolute left-0 top-0" fill="none">
          <path d="M21 22H188" stroke="#c2c2c2" strokeWidth="1.5" />
          {[0, 1, 2, 3, 4, 5, 6, 7, 8, 9, 10].map((i) => <path key={i} d={`M${21 + i * 22.4} ${i > 7 ? 10 : i % 5 ? 14 : 10}V${i > 7 ? 13 : 22}`} stroke={i > 7 ? "#dedede" : "#c2c2c2"} strokeWidth="1.5" />)}
          <path d="M245 14L252.500 21.500L245 29L237.500 21.500Z" fill="#fff" stroke="#000" strokeWidth="3" />
        </svg>
        <div className="absolute right-[36px] top-[10px] text-[24px] leading-[32px] text-black tracking-[-0.5px]">100</div>
      </div>
    </div>
  </div>
);

const GH_TABS = ["Maths", "Sets", "Vector", "Curve", "Surface", "Mesh", "Intersect", "Transform", "Display", "Rhino", "Kangaroo2", "PanelingTools"];
const Roll = ({ f, s = "#444" }) => <Svg s={36}><path d="M7 22L18 4C30 2 40 10 38 20L24 40C12 40 5 32 7 22Z" fill={f} stroke={s} strokeWidth="2" /><ellipse cx="28" cy="13" rx="8" ry="5" transform="rotate(45 28 13)" fill="rgba(0,0,0,.3)" stroke={s} strokeWidth="1.4" /></Svg>;
const SepV = ({ cls }) => <div className={`w-[2px] h-8 bg-[#d4d7d6] ${cls}`} />;

const Grasshopper = () => (
  <div className="absolute left-[205px] top-[136px] w-[1599px] h-[1200px] rounded-[20px] bg-[#ebebeb] shadow-[0_0_2px_1px_rgba(0,0,0,.35),0_26px_56px_6px_rgba(0,0,0,.42)] overflow-hidden flex flex-col">
    <div className="h-14 bg-[#eaecea] relative flex items-center justify-center shrink-0">
      <div className="absolute left-[15px] top-4 flex gap-4">{[0, 1, 2].map((i) => <div key={i} className="size-6 rounded-full bg-[#d1d4d2] border border-[#b7bab8]" />)}</div>
      <div className="font-bold text-[26.500px] text-[#a9aca9] pb-[2px]">Grasshopper - CellPhoneStand_wContext_2024_MAC*</div>
    </div>
    <div className="flex h-[44px] border-t-2 border-[#c6c8c6] text-[22.600px] font-['Liberation_Sans',sans-serif] shrink-0">
      <div className="w-[104px] -mt-[2px] ml-px h-[46px] rounded-t-[12px] border-2 border-b-0 border-[#9b9b9b] bg-gradient-to-b from-white from-50% to-[#dedede] text-[#222] flex justify-center pt-[2px] pr-1 tracking-[0.2px]">Params</div>
      <div className="grow rounded-bl-[12px] border-b-2 border-l-2 -ml-[2px] border-[#9b9b9b] text-[#747474] flex gap-[26.200px] pl-[11px] pt-[6px]">
        {GH_TABS.map((t) => <span key={t}>{t}</span>)}
      </div>
    </div>
    <div className="h-[176px] bg-gradient-to-b from-[#dcdcdc] to-[#ebebeb] flex gap-[7px] pl-[5px] pt-1 shrink-0">
      {RIBBON.map(([n, w, g]) => <RibbonPanel key={n} name={n} w={w} groups={g} />)}
    </div>
    <div className="h-[62px] border-t-2 border-[#d4d7d5] bg-[#eff3f2] flex items-center pl-px shrink-0">
      <Btn><Svg s={34}><path d="M8 20V6L12 2H26L30 8V24H8Z" fill="#e6e6e6" stroke="#999" strokeWidth="2" /><path d="M3 42V20H18L22 15H38V42Z" fill="#8fd058" stroke="#5a9a34" strokeWidth="2" /></Svg></Btn>
      <div className="w-1" />
      <Btn><Svg s={34}><rect x="3" y="2" width="38" height="40" fill="#2f5fd8" stroke="#1b3a9a" strokeWidth="2" /><rect x="9" y="3" width="26" height="16" fill="#e4e8ea" /><rect x="11" y="26" width="22" height="15" fill="#9db4e8" stroke="#1b3a9a" /><rect x="15" y="29" width="6" height="10" fill="#223f8a" /></Svg></Btn>
      <SepV cls="ml-2 mr-[8px]" />
      <div className="w-[148px] h-10 rounded-[10px] bg-white shadow-[0_1px_2px_rgba(0,0,0,.3)] flex items-center justify-between pl-5 pr-1 text-[25.500px] text-[#222]">
        <span className="pt-px">112%</span>
        <div className="w-8 h-8 rounded-[9px] bg-white shadow-[0_0_3px_rgba(0,0,0,.35)] flex items-center justify-center"><svg width="16" height="10" viewBox="0 0 16 10" fill="none"><path d="M2 2L8 8L14 2" stroke="#222" strokeWidth="2.8" strokeLinecap="round" /></svg></div>
      </div>
      <div className="w-1" />
      <Btn w="w-16"><Svg s={34}><path d="M5 16V5H16M28 5H39V16M39 28V39H28M16 39H5V28" stroke="#222" strokeWidth="6" strokeLinejoin="miter" /><path d="M18 18L26 26M26 18L18 26" stroke="#222" strokeWidth="3" /></Svg></Btn>
      <div className="w-[22px]" />
      <Btn w="w-16"><Svg s={32}><path d="M3 22C12 8 32 8 41 22C32 35 12 35 3 22Z" fill="#eef6fb" stroke="#555" strokeWidth="2.4" /><circle cx="23" cy="21" r="10" fill="#4fa0d0" stroke="#1f5f90" strokeWidth="2" /><circle cx="23" cy="21" r="4.5" fill="#111" /></Svg></Btn>
      <div className="w-5" />
      <Btn><Svg s={34}><path d="M18 32L26 18L40 3L38 24L30 36Z" fill="#d8392b" /><path d="M17 30L24 22L33 31L24 38Z" fill="#f0b848" /><path d="M24 35C16 44 4 46 4 36C5 29 12 26 8 20" stroke="#4a1a1a" strokeWidth="3.4" /></Svg></Btn>
      <div className="grow" />
      <div className="flex items-center pr-[20px]">
        <div className="flex gap-[2px]">
          <Btn><Svg s={34}><path d="M10 20L16 5C22 2 34 6 34 18L28 26H14Z" fill="url(#ball)" stroke="#aaa" strokeWidth="1.5" /><ellipse cx="22" cy="32" rx="15" ry="8.500" fill="#333" /></Svg></Btn>
          <Btn><Svg s={36}><path d="M5 24L18 4C30 2 42 12 39 20L25 40C14 40 4 34 5 24ZM12 24L24 10M22 34L34 20M14 16C22 16 28 24 28 32" stroke="#777" strokeWidth="3" /></Svg></Btn>
          <Btn on><Roll f="url(#redB)" s="#8a1810" /></Btn>
        </div>
        <SepV cls="ml-[14px] mr-[14px]" />
        <Btn><Svg s={36}><path d="M12 10C20 18 24 28 18 40L14 36C18 26 16 18 12 10Z" fill="#555" opacity=".6" /><path d="M16 10L22 3C34 4 40 12 39 20L32 34L18 40C24 28 22 18 16 10Z" fill="url(#teal)" stroke="#1c5a5a" strokeWidth="1.5" /><ellipse cx="30" cy="13" rx="6" ry="4" transform="rotate(50 30 13)" fill="#1f5f60" /><path d="M4 6L16 12M18 40L32 42" stroke="#333" strokeWidth="2" /></Svg></Btn>
        <Btn><Svg s={36}><path d="M6 24L10 16L30 36L24 41C14 41 5 34 6 24Z" fill="#d5d5d5" stroke="#aaa" /><path d="M10 14L20 3C32 2 42 10 38 22L30 34Z" fill="#5c9a2a" stroke="#36611a" strokeWidth="1.5" /><ellipse cx="29" cy="13" rx="7" ry="4.500" transform="rotate(45 29 13)" fill="#2f5a14" /><path d="M4 8L36 40" stroke="#444" strokeWidth="2" /></Svg></Btn>
        <Btn><Svg s={34}><circle cx="22" cy="21" r="18" fill="url(#ball)" stroke="#888" /><path d="M22 3A18 18 0 0 0 22 39Z" fill="#cf7a24" stroke="#8a4a14" /></Svg></Btn>
        <SepV cls="ml-1 mr-1" />
        <Btn w="w-16"><Svg s={28}><path d="M22 3L36 10L41 24L32 38L22 42L8 36L3 24L8 10Z" fill="url(#sky)" stroke="#3b4f9a" strokeWidth="3" /></Svg></Btn>
      </div>
    </div>
    <div className="relative grow mx-[2px] bg-[#dbd8d0] overflow-hidden">
      <svg width="1595" height="812" viewBox="0 0 1595 812" className="absolute left-0 top-0" fill="none">
        <path d="M263.500 0V812M599 0V812M935 0V812M1270 0V812M0 55H1595M0 167H1595M0 279H1595M0 391H1595M0 503H1595M0 615H1595M0 727H1595" stroke="#c0bdb7" strokeWidth="2" />
        <defs><linearGradient id="wire" gradientUnits="userSpaceOnUse" x1="435" y1="0" x2="586" y2="0"><stop offset="0" stopColor="#a3a39f" /><stop offset=".55" stopColor="#87966f" /><stop offset="1" stopColor="#8cb852" /></linearGradient></defs>
        <path d="M433 359.500H586M433 429C505 429 515 404 586 404" stroke="url(#wire)" strokeWidth="7" />
        <g>
          <path d="M1472 741L1484 732L1486 743L1497 731L1502 727L1498 750L1490 747L1486 756ZM1534 787L1544 796L1550 800L1556 790Z" fill="#000" />
          <circle cx="1536" cy="752" r="40.5" fill="#fff" stroke="#333" strokeWidth="2.6" />
          <circle cx="1536" cy="752" r="36" fill="url(#dial)" />
          <path d="M1533 714L1541 733L1550 717ZM1499 742L1508 749L1501 758ZM1574 752L1561 757L1571 771ZM1518 784L1529 773L1533 788Z" fill="#fff" />
        </g>
      </svg>
      <Slider cls="left-[65.500px] top-[336px] w-[359px]" labelW="w-[90px]" name="X Size" />
      <Slider cls="left-[67.500px] top-[405px] w-[357px]" labelW="w-[88px]" name="Y Size" />
      <div className="absolute left-[594px] top-[287px] w-[124px] h-[190px]">
        <Grip cls="-left-[10px] top-[17px]" /><Grip cls="-left-[10px] top-[62px]" /><Grip cls="-left-[10px] top-[106px]" /><Grip cls="-left-[10px] top-[151px]" />
        <Grip cls="-right-[10px] top-[39px]" /><Grip cls="-right-[10px] top-[129px]" />
        <div className="absolute inset-0 rounded-[7px] border-[2.400px] border-[#14400f] bg-gradient-to-b from-[#bdf07a] to-[#a0d65c] flex overflow-hidden">
          <div className="absolute inset-x-0 top-0 h-[18px] bg-white/55" />
          <div className="w-[29px] flex flex-col pt-[7px] pl-[2px] text-[23px] text-[#0b2004]">
            {["P", "X", "Y", "R"].map((t) => <div key={t} className="h-[44.700px] leading-[44.700px] text-center">{t}</div>)}
          </div>
          <div className="relative w-[55px] my-[3px] rounded-[7px] border-[2.400px] border-[#0f3309] bg-gradient-to-b from-[#526e4c] to-[#2b4a24] overflow-hidden flex items-center justify-center">
            <div className="absolute inset-x-0 top-0 h-[14px] bg-white/55" />
            <span className="-rotate-90 text-[26.500px] font-extrabold text-[#cdf6c2] whitespace-nowrap">Rectangle</span>
          </div>
          <div className="grow flex flex-col pt-[6px] pl-[5px] text-[23px] text-[#0b2004]">
            <div className="h-[90px] leading-[90px]">R</div>
            <div className="h-[90px] leading-[90px]">L</div>
          </div>
        </div>
      </div>
      <div className="absolute -left-1 top-[754px] w-4 h-[57px] border-2 border-black bg-gradient-to-b from-[#ddd] from-35% to-[#8f8f8f] to-38%" />
    </div>
    <div className="h-[50px] border-t-2 border-[#d6dad8] bg-[#eff3f1] flex items-center text-[25.500px] text-[#262626] shrink-0 pl-[2px]">
      <Svg s={33}><circle cx="22" cy="22" r="21" fill="url(#info)" /><rect x="18" y="7" width="9" height="18" rx="2" fill="#9fe8f4" stroke="#12309a" strokeWidth="2" /><circle cx="22.500" cy="33" r="4" fill="#9fe8f4" stroke="#12309a" strokeWidth="2" /></Svg>
      <span className="ml-1">Autosave complete (26 seconds ago)</span>
      <span className="ml-auto mr-[141px]">1.0.0008</span>
    </div>
  </div>
);

/* ---------- Rhino shell ---------- */
const TABS = ["工作平面", "设置视图", "显示", "选取", "工作视窗配置", "可见性", "变动", "曲线工具", "曲面工具", "实体工具", "细分工具", "网格工具", "渲染工具", "出图", "V8 新功能"];
const SNAPS = ["端点", "最近点", "点", "中点", "中心点", "交点", "垂点", "切点", "四分点", "节点", "顶点", "投影"];
const VSep = ({ cls }) => <div className={`w-[2px] h-7 bg-[#7c7c7c] ${cls}`} />;

export default function App() {
  return (
    <div className={`relative w-[2906px] h-[1606px] overflow-hidden bg-[#4f7f70] ${UI}`}>
      <Defs />
      <div className="w-full h-full rounded-l-[10px] overflow-hidden flex flex-col bg-[#d8d9dd] text-[#2a2a2a]">
        <div className="h-[53px] bg-[#f4f8f6] border-b-2 border-[#b3b8bc] relative flex items-center justify-center shrink-0">
          <div className="absolute left-3 top-3 flex gap-4">
            <div className="size-6 rounded-full bg-[#ed6a5e] border border-[#d8594e]" />
            <div className="size-6 rounded-full bg-[#f5bf4f] border border-[#dba53c]" />
            <div className="size-6 rounded-full bg-[#61c554] border border-[#52ad45]" />
          </div>
          <div className="text-[26px] font-bold text-[#3f3f3f] pb-[3px]">未命名</div>
        </div>

        <div className="flex h-[95px] shrink-0 pl-[2px]">
          <div className="w-[27px] rounded-l-[10px] bg-[#ececec] border-r-2 border-[#d8d9dd] flex justify-center pt-[25px]"><Dots vertical /></div>
          <div className="grow flex flex-col">
            <div className="h-[41px] flex bg-[#ececec]">
              <div className="w-[86px] rounded-tr-[10px] bg-[#ececec] flex justify-center pt-[5px] pl-[2px] text-[22px] text-[#222]">标准</div>
              <div className="grow bg-[#d8d9dd] rounded-bl-[10px] flex gap-[41.650px] pl-[21px] pr-[7px] pt-[5px] text-[22px] text-[#6a6a6d] whitespace-nowrap">
                {TABS.map((t) => <span key={t}>{t}</span>)}
                <div className="ml-auto pt-px"><Gear /></div>
              </div>
            </div>
            <div className="h-[54px] bg-gradient-to-b from-[#ececec] to-[#ebebeb] flex">
              {TOP.map((ic, i) => (
                <div key={i} className={`relative w-14 h-[54px] shrink-0 pt-[6px] flex justify-center items-start ${i === 0 ? "bg-[#a9a9a9]" : ""}`}>
                  {ic}
                  {[2, 31, 32].includes(i) && <svg width="11" height="10" className="absolute right-0 bottom-0"><path d="M11 0V10H0Z" fill="#555" /></svg>}
                </div>
              ))}
            </div>
          </div>
        </div>

        <div className="flex h-[1366px] pt-[6px] pl-[2px] shrink-0">
          <div className="w-[252px] flex flex-col gap-[6px] shrink-0">
            <div className="h-[680px] bg-[#ececec] rounded-tl-[10px] overflow-hidden">
              <div className="h-7 border-b-2 border-[#d8d9dd] flex items-center justify-center"><Dots /></div>
              <div className="mt-[21px] ml-[18px] h-10 w-[226px] bg-white border border-[#d0d0d0] border-b-[#a8a8a8] pl-[6px] text-[25.500px] leading-[38px] text-[#bdbdbd]">指令</div>
              <div className="mt-[26px] ml-[8px] w-[224px] grid grid-cols-4">
                {TOOLS.map(([tri, ic], i) => (
                  <div key={i} className="relative size-14 flex items-center justify-center">
                    {ic}
                    {tri === 1 && <svg width="13" height="12" className="absolute right-0 bottom-px"><path d="M13 0V12H0Z" fill="#666" /></svg>}
                  </div>
                ))}
              </div>
            </div>
            <div className="h-[674px] bg-[#ececec] rounded-tl-[10px] flex flex-col">
              <div className="h-[40px] pl-[10px] text-[26px] leading-[36px] text-[#8c8c8c]">物件锁点</div>
              <div className="h-[42px] flex bg-[#ececec] border-t-2 border-[#d8d9dd]">
                <div className="w-[72px] flex items-center pl-[17px]"><svg width="36" height="32" viewBox="0 0 36 32" fill="none"><circle cx="17" cy="16" r="13.500" stroke="#777" strokeWidth="1.8" /><path d="M17 16H35" stroke="#000" strokeWidth="2" /><rect x="14" y="13" width="6" height="6" fill="#fff" stroke="#000" strokeWidth="2" /></svg></div>
                <div className="grow bg-[#d8d9dd] rounded-bl-[10px] pl-[20px] pt-[5px]"><svg width="32" height="32" viewBox="0 0 32 32" fill="none"><path d="M6 5C12 2 20 2 26 5L18 17V28H14V17Z" fill="url(#steel)" stroke="#222" strokeWidth="2" /><path d="M26 2H30V6M2 25V29H6" stroke="#333" strokeWidth="2" /></svg></div>
              </div>
              <div className="pt-[16px] pl-7 text-[22px] text-[#262626]">
                {SNAPS.map((s) => <div key={s} className="h-[30px] flex items-center gap-2"><Check /><span>{s}</span></div>)}
                <div className="h-[30px] mt-[34px] flex items-center gap-2"><Check /><span>停用</span></div>
              </div>
            </div>
          </div>

          <div className="w-[2180px] ml-[6px] flex flex-col shrink-0">
            <div className="h-[1308px] bg-[#e6e9ea] flex flex-col gap-[6px]">
              <div className="flex gap-[6px] h-[654px]">
                <div className="w-[1091px] bg-[#9fa4ac]" />
                <PerspectiveView />
              </div>
              <div className="flex gap-[6px] h-[648px]">
                <OrthoView id="g1" w={1091} ox={74.5} lx={72} label="x" />
                <OrthoView id="g2" w={1083} ox={541} lx={71} label="y" axes />
              </div>
            </div>
            <div className="h-[52px] bg-[#f0f0f0] flex items-start text-[25px] text-[#6b6b6b] leading-[46px]">
              <svg width="32" height="30" viewBox="0 0 32 30" fill="none" className="ml-[20px] mt-[10px]"><path d="M1 1H31V29H1ZM16 1V29M1 15H31" stroke="#3b78f0" strokeWidth="1.5" /><path d="M2 3H8M17 3H23M2 17H8M17 17H23" stroke="#3b78f0" strokeWidth="2" /></svg>
              <svg width="32" height="30" viewBox="0 0 32 30" fill="none" className="ml-[32px] mt-[10px]"><path d="M1 1H31V29H1Z" stroke="#999" strokeWidth="1.5" /><path d="M2 3H8" stroke="#888" strokeWidth="2" /></svg>
              <VSep cls="ml-[26px] mt-3" />
              <span className="w-[182px] ml-[38px] text-[#2f6fed] tracking-[0.1px]">Perspective</span><VSep cls="mt-3" />
              <span className="w-[84px] ml-[38px]">Top</span><VSep cls="mt-3" />
              <span className="w-[103px] ml-[38px]">Front</span><VSep cls="mt-3" />
              <span className="w-[104px] ml-[38px]">Right</span><VSep cls="mt-3" />
              <span className="ml-[38px] text-[26px]">图纸配置</span>
            </div>
          </div>

          <div className="ml-[6px] w-[460px] flex flex-col shrink-0">
            <div className="h-[30px] border-b-2 border-[#d8d9dd] bg-[#ececec] rounded-t-[10px] flex items-center pl-[208px] pr-[7px] justify-between"><Dots /><Gear /></div>
            <div className="grow flex overflow-hidden">
              <div className="w-[384px] bg-[#ececec] flex flex-col">
                <div className="h-[84px] flex items-start pl-[116px] shrink-0">
                  <div className="size-12 bg-white mt-[18px] flex items-center justify-center"><Svg><path d="M1 14L4 10H14L18 5H30L33 10H41L43 14V36Q43 40 39 40H5Q1 40 1 36Z" fill="#2c2c2c" stroke="#111" /><circle cx="26" cy="26" r="12" fill="#444" stroke="#bbb" strokeWidth="2" /><circle cx="26" cy="26" r="7" fill="#26443c" stroke="#888" strokeWidth="1.5" /><path d="M5 16H13V34H5Z" fill="#555" /></Svg></div>
                  <div className="w-12 h-11 mt-5 ml-3 border-[2.500px] border-[#666] bg-[#cfcfcf] p-[3px]"><div className="w-full h-full border-2 border-[#5fb0ea] p-[2px] bg-[#dfdfdf]"><div className="w-full h-full border-2 border-[#d8281c] bg-white" /></div></div>
                  <div className="ml-[15px] mt-[19px]"><Svg><ellipse cx="18" cy="40" rx="14" ry="3.500" fill="#777" /><circle cx="36" cy="9" r="6.500" fill="url(#pearl)" stroke="#333" /><circle cx="27" cy="18" r="9" fill="url(#pearl)" stroke="#111" /><circle cx="14" cy="30" r="11.500" fill="url(#pearl)" stroke="#000" strokeWidth="2" /></Svg></div>
                </div>
                <Title>工作视窗</Title>
                <div className="h-[6px] shrink-0" />
                <Row label="标题"><Field w="w-[146px]">Perspective</Field></Row>
                <Num label="宽度" v="1083" off />
                <Num label="高度" v="654" off />
                <Row label="投影" h="h-12"><Popup>透视</Popup></Row>
                <Row label="显示模式" h="h-12"><Popup>着色模式</Popup></Row>
                <Row label="锁定" h="h-[46px]"><Check /></Row>
                <Rule first />
                <Title>摄像机</Title>
                <div className="h-[6px] shrink-0" />
                <Num label={<span className="-mr-[3px] tracking-[-0.2px]">镜头焦距 (mm)</span>} v="35.0" />
                <Num label="旋转" v="0.0" />
                <Num label="X 坐标" v="-4.596" />
                <Num label="Y 坐标" v="-11.547" />
                <Num label="Z 坐标" v="44.626" />
                <Row label="目标点距离"><Field w="w-[141px]">48.518</Field></Row>
                <Row label="位置" h="h-14"><Push>放置...</Push></Row>
                <Rule />
                <Title>目标点</Title>
                <div className="h-[6px] shrink-0" />
                <Num label="X 目标点" v="-0.101" />
                <Num label="Y 目标点" v="9.599" />
                <Num label="Z 目标点" v="1.191" />
                <Row label="位置" h="h-14"><Push>放置...</Push></Row>
                <Rule />
                <Title>底色图案</Title>
                <div className="h-[6px] shrink-0" />
                <Row label="文件名称" h="h-14"><Field w="w-[82px]"><span className="text-[#bdbdbd]">(无)</span></Field><div className="ml-[18px]"><Push w="w-12">...</Push></div></Row>
              </div>
              <div className="w-[36px] bg-[#ececec] pr-[10px] pt-[70px]">
                <div className="h-full bg-[#fafafa] flex justify-center pt-[6px] border-l border-[#e4e4e4]"><div className="w-4 h-[1108px] rounded-full bg-[#c1c1c1]" /></div>
              </div>
              <div className="w-10 flex flex-col items-center">
                <div className="w-10 h-[72px] bg-[#ececec] rounded-br-[10px] flex justify-center items-center shrink-0"><Wheel s={30} r={14} w={7} /></div>
                <div className="mt-[22px]"><Layers s={28} /></div>
                <svg width="30" height="30" viewBox="0 0 30 30" className="mt-[43px] shrink-0"><rect width="30" height="24" fill="#222" /><rect x="3" y="3" width="24" height="18" fill="#bdbdbd" /><path d="M12 24H18V27H22V30H8V27H12Z" fill="#222" /></svg>
                <svg width="30" height="30" viewBox="0 0 30 30" className="mt-[42px] shrink-0"><rect x="1" y="1" width="28" height="28" fill="#fff" stroke="#333" strokeWidth="2" /><rect x="1" y="1" width="28" height="4" fill="#4a3fd0" stroke="#111" /><path d="M4 27C2 14 8 7 15 7S28 14 26 27Z" fill="#3d55c8" /><text x="15" y="25" textAnchor="middle" fontFamily="Liberation Serif" fontWeight="700" fontSize="20" fill="#fff">?</text></svg>
              </div>
            </div>
          </div>
        </div>

        <div className="mt-[6px] ml-[2px] h-[32px] bg-[#ececec] rounded-tl-[10px] flex text-[22px] leading-[30px] text-[#3c3c3c] shrink-0">
          <div className="w-[41px] border-r-2 border-[#d8d9dd] flex justify-center pt-[6px]"><Dots n={2} vertical /></div>
          <span className="pl-[10px]">指令: <span className="tracking-[0.9px]">_Grasshopper</span></span>
        </div>
        <div className="ml-[2px] h-[50px] bg-[#ececec] flex items-center text-[22px] text-[#454545] shrink-0 whitespace-pre leading-[40px]">
          <svg width="24" height="24" viewBox="0 0 24 24" className="ml-[10px]"><rect width="24" height="24" fill="#505050" /><rect x="8" y="4" width="12" height="16" fill="#ececec" /></svg>
          <svg width="30" height="26" viewBox="0 0 30 26" className="ml-[13px]"><path d="M1 3H4M8 3H30M1 13H4M8 13H30M1 23H4M8 23H30" stroke="#6a6a6a" strokeWidth="3" /></svg>
          <div className="w-[152px] h-[38px] ml-[3px] bg-white rounded-[4px] text-center font-bold text-[#222]">世界</div>
          <span className="w-[393px] ml-[123px] pt-[2px]">x 2.64  y -2.92  z 0</span>
          <span className="w-[130px] pt-[2px]">毫米</span>
          <div className="size-8 bg-black" />
          <span className="w-[189px] ml-[13px] pt-[2px]">默认</span>
          <span className="w-[125px] pt-[2px]">锁定格点</span>
          <span className="w-[81px] pt-[2px]">正交</span>
          <span className="w-[110px] pt-[2px]">平面模式</span>
          <div className="w-[120px] h-[38px] bg-white rounded-[4px] text-center font-bold text-[#222]">物件锁点</div>
          <div className="w-[120px] h-[38px] ml-[6px] bg-white rounded-[4px] text-center font-bold text-[#222]">智慧轨迹</div>
          <span className="w-[215px] ml-[23px] pt-[2px]">操作轴 (工作平面)</span>
          <svg width="20" height="26" viewBox="0 0 20 26" fill="none"><rect x="1" y="10" width="17" height="14" rx="2" stroke="#999" strokeWidth="2" /><path d="M5 10V6C5 0 14 0 14 6V10" stroke="#999" strokeWidth="2" /></svg>
          <span className="w-[277px] ml-[20px] pt-[2px]">自动对齐工作平面 (物件)</span>
          <span className="w-[154px] pt-[2px]">记录建构历史</span>
          <div className="w-[98px] h-[38px] bg-white rounded-[4px] text-center font-bold text-[#222]">过滤器</div>
          <svg width="24" height="24" viewBox="0 0 24 24" className="ml-auto mr-[10px]"><rect width="24" height="24" fill="#505050" /><rect x="4" y="4" width="12" height="16" fill="#ececec" /></svg>
        </div>
      </div>
      <Grasshopper />
    </div>
  );
}
